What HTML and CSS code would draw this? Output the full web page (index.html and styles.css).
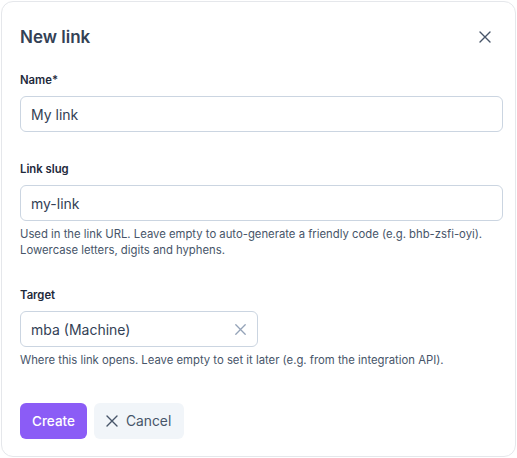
FILE: index.html
```html
<!DOCTYPE html>
<html lang="en">
<head>
<meta charset="utf-8">
<title>New link</title>
<link rel="stylesheet" href="styles.css">
</head>
<body>
<div class="modal">
  <div class="header">
    <h2 class="title">New link</h2>
    <button class="close" type="button" aria-label="Close">
      <svg width="12" height="12" viewBox="0 0 12 12"><path d="M1 1L11 11M11 1L1 11" stroke="currentColor" stroke-width="1.4" stroke-linecap="round" fill="none"/></svg>
    </button>
  </div>
  <form class="form">
    <div class="field">
      <label class="label">Name*</label>
      <div class="input"><span class="value">My link</span></div>
    </div>
    <div class="field">
      <label class="label">Link slug</label>
      <div class="input"><span class="value">my-link</span></div>
      <p class="help">Used in the link URL. Leave empty to auto-generate a friendly code (e.g. bhb-zsfi-oyi). Lowercase letters, digits and hyphens.</p>
    </div>
    <div class="field">
      <label class="label">Target</label>
      <div class="input input-select"><span class="value">mba (Machine)</span>
        <svg class="clear" width="11" height="11" viewBox="0 0 11 11"><path d="M0.8 0.8L10.2 10.2M10.2 0.8L0.8 10.2" stroke="currentColor" stroke-width="1.3" stroke-linecap="round" fill="none"/></svg>
      </div>
      <p class="help">Where this link opens. Leave empty to set it later (e.g. from the integration API).</p>
    </div>
    <div class="actions">
      <button class="btn btn-primary" type="button">Create</button>
      <button class="btn btn-secondary" type="button">
        <svg width="12" height="12" viewBox="0 0 12 12"><path d="M1 1L11 11M11 1L1 11" stroke="currentColor" stroke-width="1.4" stroke-linecap="round" fill="none"/></svg>
        <span>Cancel</span>
      </button>
    </div>
  </form>
</div>
</body>
</html>
```
FILE: styles.css
```css
* { box-sizing: border-box; }
html, body { margin: 0; padding: 0; background: #ffffff; }
body { font-family: Inter, "Noto Sans", "Liberation Sans", sans-serif; color: #334155; }

.modal {
  margin: 1px 0 0 1px;
  width: 515px;
  height: 456px;
  border: 1px solid #e5e7eb;
  border-radius: 12px;
  background: #fff;
  padding: 21px 12px 0 18px;
}

.header {
  display: flex;
  align-items: center;
  justify-content: space-between;
  height: 28px;
  margin-bottom: 21px;
}
.title {
  margin: 0;
  font-size: 17px;
  line-height: 28px;
  font-weight: 600;
  color: #334155;
}
.close {
  width: 24px;
  height: 24px;
  margin-right: 6px;
  padding: 0;
  border: 0;
  background: transparent;
  color: #475569;
  display: flex;
  align-items: center;
  justify-content: center;
}

.form { display: flex; flex-direction: column; }
.field + .field { margin-top: 29px; }
.label {
  display: block;
  font-size: 11.3px;
  line-height: 16px;
  font-weight: 600;
  color: #1e293b;
  margin-bottom: 8px;
}
.input {
  height: 36px;
  width: 483px;
  border: 1px solid #cbd5e1;
  border-radius: 6px;
  padding: 0 10px;
  display: flex;
  align-items: center;
  font-size: 14px;
  color: #334155;
}
.input-select { width: 238px; justify-content: space-between; padding-right: 11px; }
.clear { color: #94a3b8; }
.help {
  margin: 5px 0 0;
  font-size: 11.3px;
  line-height: 16px;
  color: #475569;
}

.actions {
  display: flex;
  gap: 7px;
  margin-top: 35px;
}
.btn {
  height: 36px;
  border: 0;
  border-radius: 6px;
  font-family: inherit;
  font-size: 13.5px;
  padding: 0 12px;
  display: flex;
  align-items: center;
  gap: 8px;
}
.btn-primary {
  background: #8b5cf6;
  color: #fff;
  font-weight: 500;
}
.btn-secondary {
  background: #f1f5f9;
  color: #475569;
  font-weight: 400;
  font-size: 13.8px;
  padding: 0 13px 0 12px;
}
```
